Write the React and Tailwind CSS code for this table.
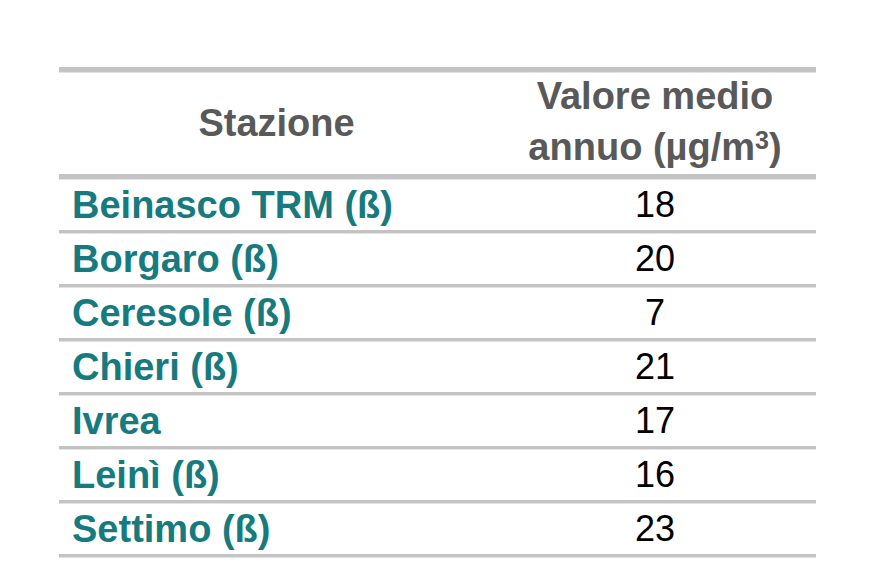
import React from 'react';

const rows = [
  { name: 'Beinasco TRM (ß)', value: 18 },
  { name: 'Borgaro (ß)', value: 20 },
  { name: 'Ceresole (ß)', value: 7 },
  { name: 'Chieri (ß)', value: 21 },
  { name: 'Ivrea', value: 17 },
  { name: 'Leinì (ß)', value: 16 },
  { name: 'Settimo (ß)', value: 23 },
];

const Line = ({ thick }) => (
  <div className={`col-span-2 ${thick ? 'h-[6px]' : 'h-[4px]'} bg-[#c3c3c3] border-b border-[#e3e3e3]`} />
);

export default function App() {
  return (
    <div className="w-[886px] h-[564px] bg-white pt-[67px] pl-[59px] font-['Liberation_Sans',Arial,sans-serif]">
      <div className="grid grid-cols-[435px_322px] w-[757px]">
        <Line thick />
        <div className="h-[101px] flex items-center justify-center text-[38px] font-bold text-[#595959]">
          Stazione
        </div>
        <div className="h-[101px] flex flex-col items-center justify-center text-[38px] leading-[51px] font-bold text-[#595959]">
          <span>Valore medio</span>
          <span>
            annuo (µg/m<span className="relative -top-[0.42em] text-[0.66em] font-bold">3</span>)
          </span>
        </div>
        <Line thick />
        {rows.map((r) => (
          <React.Fragment key={r.name}>
            <div className="h-[50px] flex items-center pl-[13px] text-[38px] font-bold text-[#177a7e]">
              {r.name}
            </div>
            <div className="h-[50px] flex items-center justify-center text-[36px] text-black">
              {r.value}
            </div>
            <Line />
          </React.Fragment>
        ))}
      </div>
    </div>
  );
}
